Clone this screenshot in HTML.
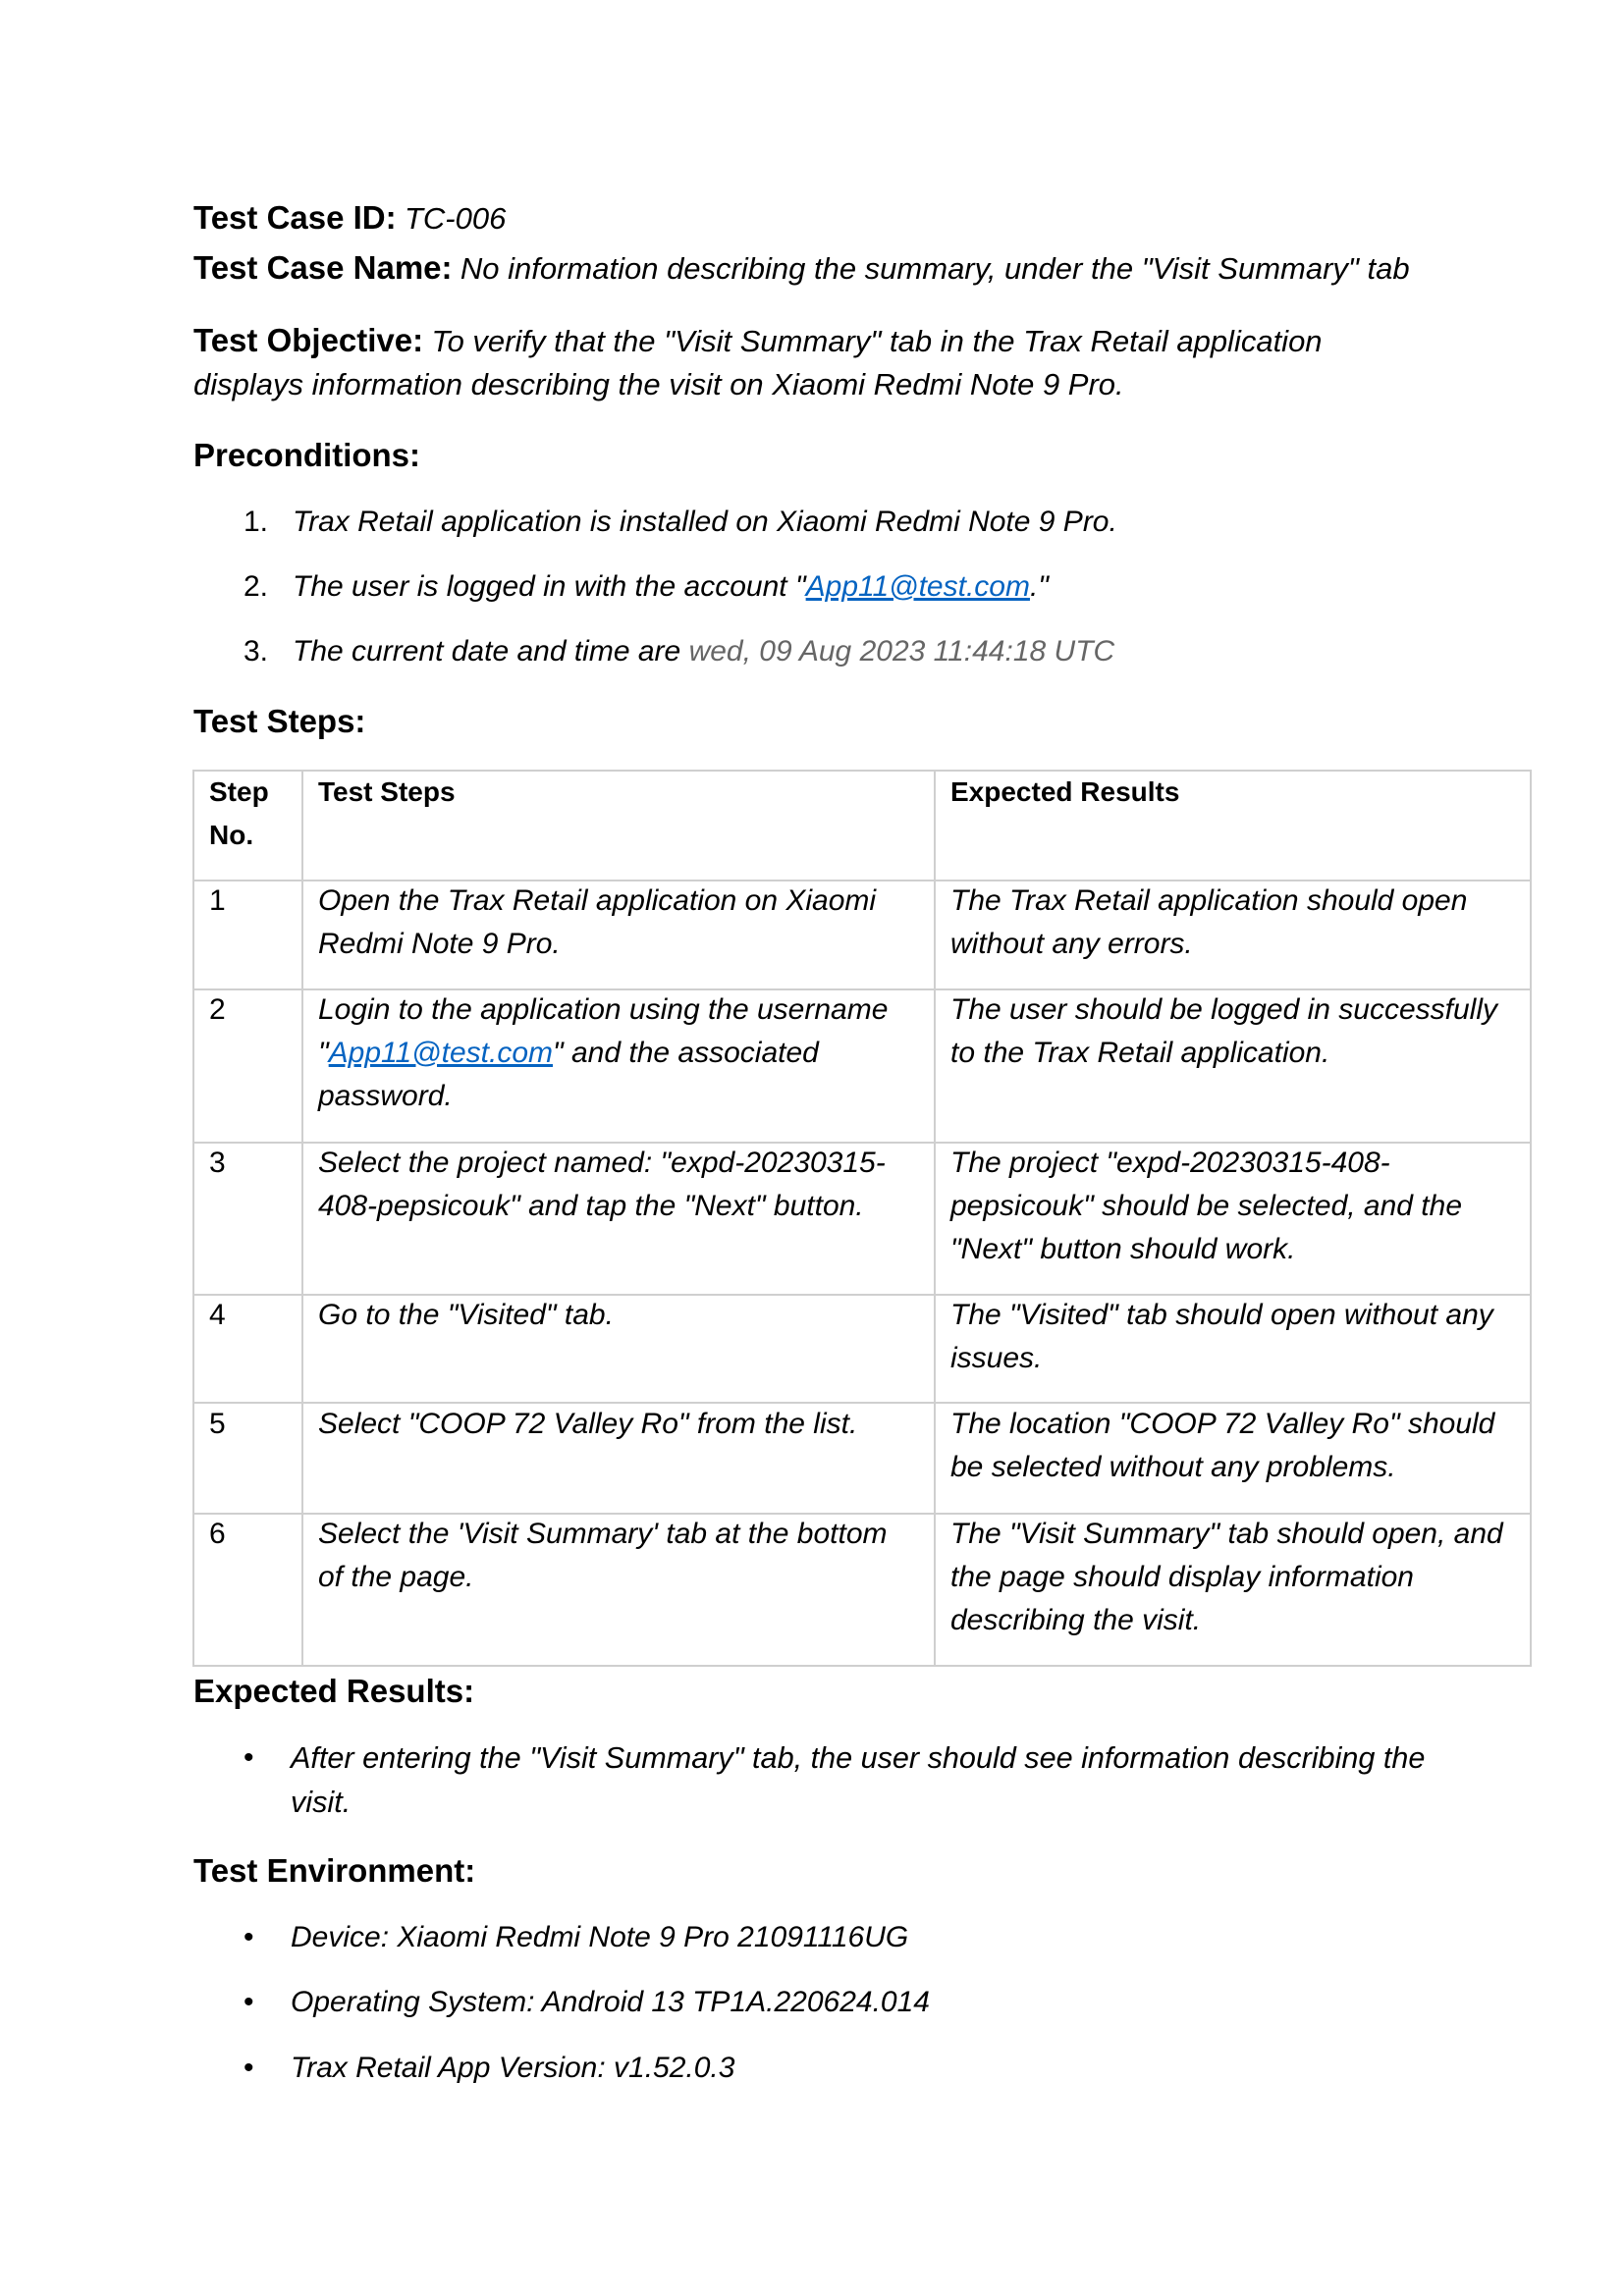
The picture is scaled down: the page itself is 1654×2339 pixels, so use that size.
<!DOCTYPE html>
<html><head><meta charset="utf-8"><style>
body{margin:0;background:#fff;}
#p{position:relative;width:1654px;height:2339px;overflow:hidden;font-family:"Liberation Sans",Arial,sans-serif;color:#000;}
.l{position:absolute;white-space:nowrap;line-height:36px;font-size:30px;font-style:italic;}
.h{font-style:normal;font-weight:bold;font-size:33px;}
.s{font-size:31px;}
.e{font-size:30.6px;}
a{color:#0563c1;text-decoration:underline;}
.g{color:#666;}
.b{position:absolute;background:#cfcfcf;}
.t{position:absolute;white-space:nowrap;line-height:43.8px;font-size:30px;font-style:italic;}
.th{font-style:normal;font-weight:bold;font-size:28px;}
.n{font-style:normal;}
</style></head><body><div id="p">
<div class="l" style="left:197px;top:204px"><span class="h">Test Case ID:</span> <span class="s">TC-006</span></div>
<div class="l" style="left:197px;top:255px"><span class="h">Test Case Name:</span> <span class="s">No information describing the summary, under the "Visit Summary" tab</span></div>
<div class="l" style="left:197px;top:329px"><span class="h">Test Objective:</span> <span class="s">To verify that the "Visit Summary" tab in the Trax Retail application</span></div>
<div class="l s" style="left:197px;top:374px">displays information describing the visit on Xiaomi Redmi Note 9 Pro.</div>
<div class="l h" style="left:197px;top:446px">Preconditions:</div>
<div class="l n" style="left:248px;top:514px">1.</div>
<div class="l" style="left:298px;top:514px">Trax Retail application is installed on Xiaomi Redmi Note 9 Pro.</div>
<div class="l n" style="left:248px;top:580px">2.</div>
<div class="l" style="left:298px;top:580px">The user is logged in with the account "<a>App11@test.com</a>."</div>
<div class="l n" style="left:248px;top:646px">3.</div>
<div class="l" style="left:298px;top:646px">The current date and time are <span class="g">wed, 09 Aug 2023 11:44:18 UTC</span></div>
<div class="l h" style="left:197px;top:717px">Test Steps:</div>

<div class="b" style="left:196px;top:784px;width:1364px;height:2px"></div>
<div class="b" style="left:196px;top:896px;width:1364px;height:2px"></div>
<div class="b" style="left:196px;top:1007px;width:1364px;height:2px"></div>
<div class="b" style="left:196px;top:1163px;width:1364px;height:2px"></div>
<div class="b" style="left:196px;top:1318px;width:1364px;height:2px"></div>
<div class="b" style="left:196px;top:1428px;width:1364px;height:2px"></div>
<div class="b" style="left:196px;top:1541px;width:1364px;height:2px"></div>
<div class="b" style="left:196px;top:1696px;width:1364px;height:2px"></div>
<div class="b" style="left:196px;top:784px;width:2px;height:914px"></div>
<div class="b" style="left:307px;top:784px;width:2px;height:914px"></div>
<div class="b" style="left:951px;top:784px;width:2px;height:914px"></div>
<div class="b" style="left:1558px;top:784px;width:2px;height:914px"></div>

<div class="t th" style="left:213px;top:785px">Step<br>No.</div>
<div class="t th" style="left:324px;top:785px">Test Steps</div>
<div class="t th" style="left:968px;top:785px">Expected Results</div>

<div class="t n" style="left:213px;top:896px">1</div>
<div class="t" style="left:324px;top:896px">Open the Trax Retail application on Xiaomi<br>Redmi Note 9 Pro.</div>
<div class="t" style="left:968px;top:896px">The Trax Retail application should open<br>without any errors.</div>

<div class="t n" style="left:213px;top:1007px">2</div>
<div class="t" style="left:324px;top:1007px">Login to the application using the username<br>"<a>App11@test.com</a>" and the associated<br>password.</div>
<div class="t" style="left:968px;top:1007px">The user should be logged in successfully<br>to the Trax Retail application.</div>

<div class="t n" style="left:213px;top:1163px">3</div>
<div class="t" style="left:324px;top:1163px">Select the project named: "expd-20230315-<br>408-pepsicouk" and tap the "Next" button.</div>
<div class="t" style="left:968px;top:1163px">The project "expd-20230315-408-<br>pepsicouk" should be selected, and the<br>"Next" button should work.</div>

<div class="t n" style="left:213px;top:1318px">4</div>
<div class="t" style="left:324px;top:1318px">Go to the "Visited" tab.</div>
<div class="t" style="left:968px;top:1318px">The "Visited" tab should open without any<br>issues.</div>

<div class="t n" style="left:213px;top:1429px">5</div>
<div class="t" style="left:324px;top:1429px">Select "COOP 72 Valley Ro" from the list.</div>
<div class="t" style="left:968px;top:1429px">The location "COOP 72 Valley Ro" should<br>be selected without any problems.</div>

<div class="t n" style="left:213px;top:1541px">6</div>
<div class="t" style="left:324px;top:1541px">Select the 'Visit Summary' tab at the bottom<br>of the page.</div>
<div class="t" style="left:968px;top:1541px">The "Visit Summary" tab should open, and<br>the page should display information<br>describing the visit.</div>

<div class="l h" style="left:197px;top:1705px">Expected Results:</div>
<div class="l n" style="left:248px;top:1773px">•</div>
<div class="l e" style="left:296px;top:1773px">After entering the "Visit Summary" tab, the user should see information describing the</div>
<div class="l e" style="left:296px;top:1818px">visit.</div>
<div class="l h" style="left:197px;top:1888px">Test Environment:</div>
<div class="l n" style="left:248px;top:1956px">•</div>
<div class="l" style="left:296px;top:1956px">Device: Xiaomi Redmi Note 9 Pro 21091116UG</div>
<div class="l n" style="left:248px;top:2022px">•</div>
<div class="l" style="left:296px;top:2022px">Operating System: Android 13 TP1A.220624.014</div>
<div class="l n" style="left:248px;top:2089px">•</div>
<div class="l" style="left:296px;top:2089px">Trax Retail App Version: v1.52.0.3</div>
</div></body></html>
